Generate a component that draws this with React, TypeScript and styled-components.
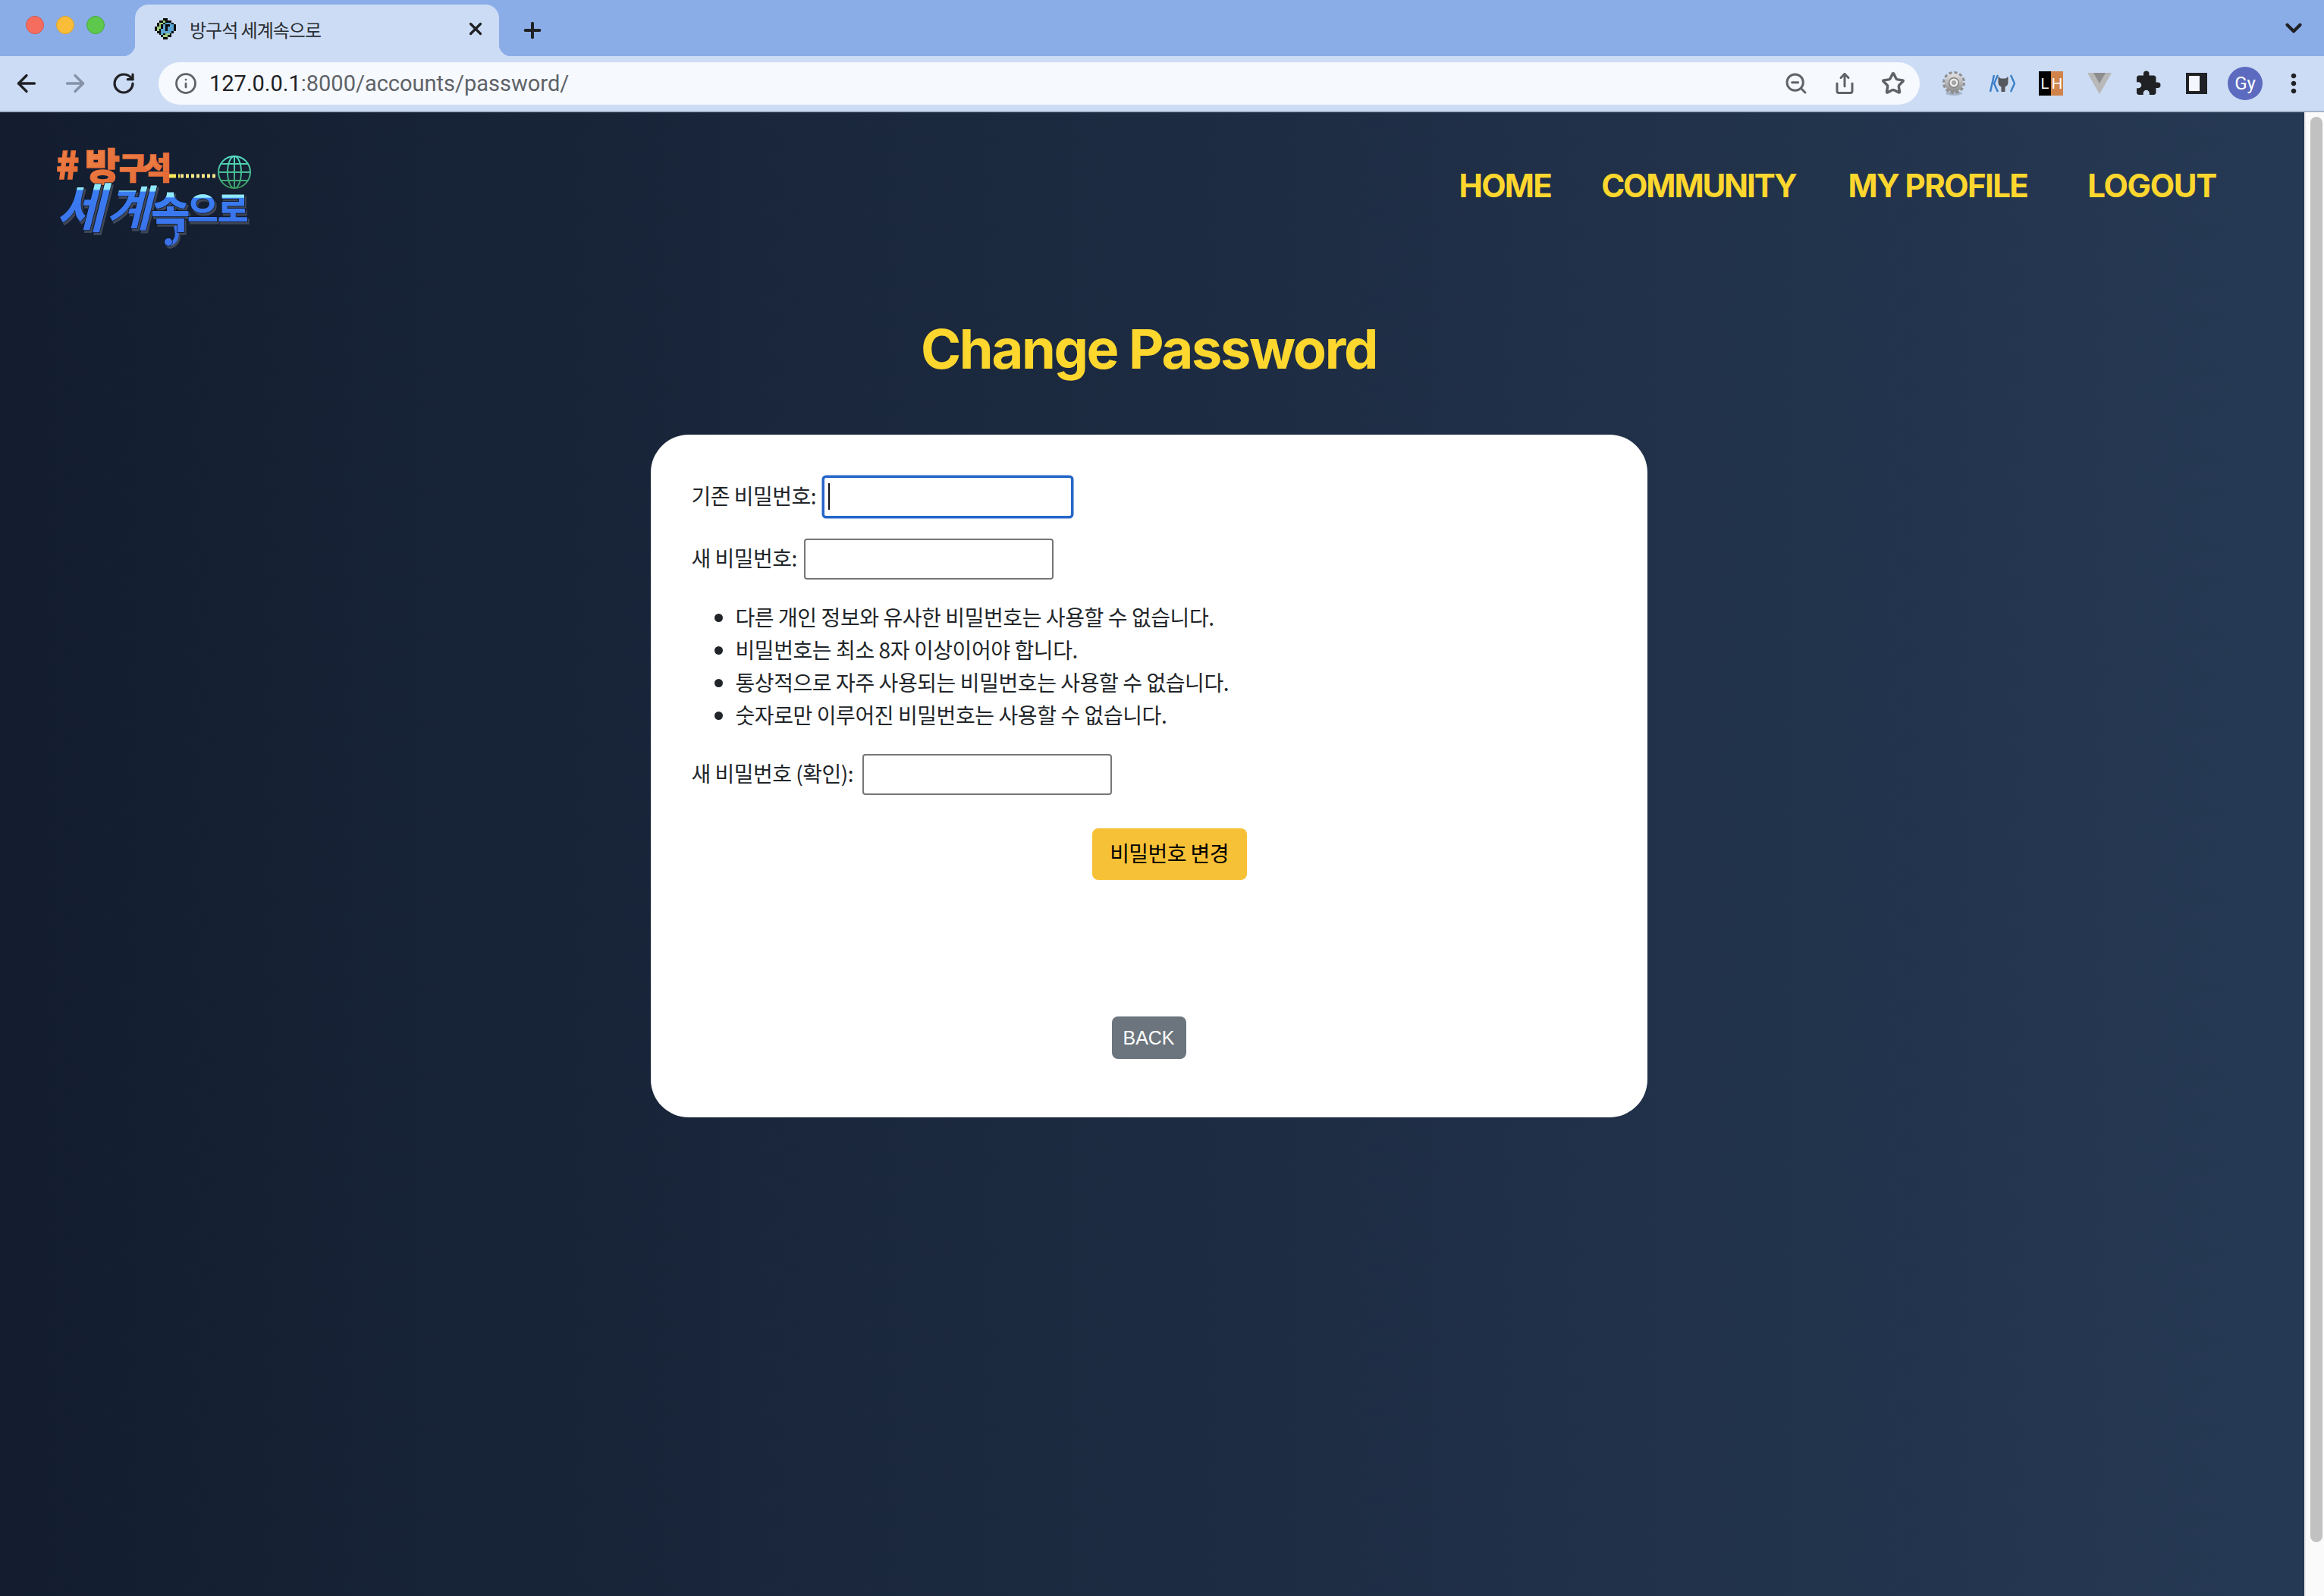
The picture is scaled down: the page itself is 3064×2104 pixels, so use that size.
import React from "react";
import styled, { createGlobalStyle } from "styled-components";
import { ArrowLeft, ArrowRight, RotateCw, Info, ZoomOut, Share, Star, X, Plus, ChevronDown } from "lucide-react";
import { MdExtension, MdMoreVert } from "react-icons/md";

const Global = createGlobalStyle`
  html, body { margin: 0; padding: 0; background: #fff; }
  body { font-family: "Noto Sans CJK KR", "Liberation Sans", sans-serif; color: #212529; }
  * { box-sizing: border-box; }
`;

const Shell = styled.div`
  width: 3064px;
  height: 2104px;
  display: flex;
  flex-direction: column;
  overflow: hidden;
`;

const TabStrip = styled.div`
  height: 74px;
  background: #8aade8;
  display: flex;
  align-items: flex-end;
`;

const Lights = styled.div`
  display: flex;
  gap: 16px;
  padding: 0 40px 29px 34px;
`;

const Light = styled.span<{ $c: string; $b: string }>`
  width: 24px;
  height: 24px;
  border-radius: 50%;
  background: ${(p) => p.$c};
  border: 1px solid ${(p) => p.$b};
`;

const Tab = styled.div`
  position: relative;
  width: 480px;
  height: 68px;
  background: #ccdcf5;
  border-radius: 18px 18px 0 0;
  display: flex;
  align-items: center;
  padding: 0 18px 4px 26px;
  &::before, &::after {
    content: "";
    position: absolute;
    bottom: 0;
    width: 16px;
    height: 16px;
  }
  &::before { left: -16px; background: radial-gradient(circle at 0 0, transparent 16px, #ccdcf5 16.5px); }
  &::after { right: -16px; background: radial-gradient(circle at 100% 0, transparent 16px, #ccdcf5 16.5px); }
`;

const TabTitle = styled.span`
  margin-left: 18px;
  flex: 1;
  font-size: 24px;
  letter-spacing: -1px;
  color: #2a2e33;
  white-space: nowrap;
`;

const NewTab = styled.div`
  width: 88px;
  display: flex;
  justify-content: center;
  padding-bottom: 18px;
  color: #202124;
`;

const TabMenu = styled.div`
  margin-left: auto;
  width: 80px;
  display: flex;
  justify-content: center;
  padding: 0 0 20px 0;
  color: #202124;
`;

const Toolbar = styled.div`
  height: 74px;
  background: #ccdcf5;
  border-bottom: 2px solid #a6b4c9;
  display: flex;
  align-items: center;
  padding-left: 3px;
`;

const Slot = styled.div<{ $c?: string }>`
  width: 64px;
  height: 56px;
  flex: none;
  display: flex;
  align-items: center;
  justify-content: center;
  color: ${(p) => p.$c || "#202124"};
`;

const Omnibox = styled.div`
  margin-left: 14px;
  margin-right: 13px;
  width: 2322px;
  height: 56px;
  border-radius: 28px;
  background: #f6f9fe;
  display: flex;
  align-items: center;
  padding: 0 3px 0 21px;
  color: #5f6368;
`;

const Url = styled.div`
  margin-left: 16px;
  flex: 1;
  font-family: "Roboto", "Liberation Sans", sans-serif;
  font-size: 29px;
  letter-spacing: 0px;
  color: #5f6368;
  b { font-weight: 400; color: #202124; }
`;

const LhBadge = styled.div`
  width: 32px;
  height: 32px;
  display: flex;
  font-family: "Liberation Sans", sans-serif;
  font-size: 20px;
  color: #fff;
`;

const LhPart = styled.span<{ $bg: string }>`
  flex: 1;
  background: ${(p) => p.$bg};
  display: flex;
  align-items: center;
  justify-content: center;
`;

const Avatar = styled.div`
  width: 46px;
  height: 44px;
  border-radius: 50%;
  background: #5c6bc0;
  color: #fff;
  font-family: "Roboto", sans-serif;
  font-size: 24px;
  display: flex;
  align-items: center;
  justify-content: center;
`;

const Viewport = styled.div`
  flex: 1;
  display: flex;
  min-height: 0;
`;

const Page = styled.div`
  width: 3038px;
  background: linear-gradient(to right, #131d2f, #263954);
`;

const Scrollbar = styled.div`
  width: 26px;
  background: #fafafa;
  border-left: 2px solid #ececec;
  padding: 6px 2px 0 6px;
`;

const Thumb = styled.div`
  height: 1879px;
  border-radius: 8px;
  background: #c1c1c1;
`;

const Navbar = styled.header`
  display: flex;
  justify-content: space-between;
  align-items: flex-start;
  padding: 40px 116px 0 70px;
`;

const NavList = styled.nav`
  display: flex;
  margin-top: 32px;
`;

const NavLink = styled.a<{ $ml: number; $ls: number }>`
  margin-left: ${(p) => p.$ml}px;
  font-family: "Inter", sans-serif;
  font-weight: 700;
  font-size: 42px;
  line-height: 50px;
  letter-spacing: ${(p) => p.$ls}px;
  color: #fdd72e;
  white-space: nowrap;
`;

const Main = styled.main`
  display: flex;
  flex-direction: column;
  align-items: center;
  padding-right: 9px;
`;

const Title = styled.h1`
  margin: 89px 0 70px;
  font-family: "Inter", sans-serif;
  font-weight: 700;
  font-size: 72px;
  line-height: 86px;
  letter-spacing: -2.3px;
  color: #fdd72e;
`;

const Card = styled.section`
  width: 1314px;
  height: 900px;
  background: #fff;
  border-radius: 50px;
  padding: 55px 54px 0;
  display: flex;
  flex-direction: column;
`;

const Field = styled.div<{ $gap?: number }>`
  display: flex;
  align-items: center;
  gap: ${(p) => p.$gap ?? 9}px;
  font-size: 28px;
  letter-spacing: -0.5px;
  label { position: relative; top: -2px; }
`;

const InputWrap = styled.div`
  position: relative;
  display: flex;
`;

const TextInput = styled.input<{ $focused?: boolean }>`
  width: 329px;
  height: 54px;
  padding: 2px 6px;
  background: #fff;
  border: 2px solid #767676;
  border-radius: 4px;
  outline: none;
  ${(p) => p.$focused && `
    border-color: #2566c9;
    box-shadow: 0 0 0 1.5px #2566c9;
  `}
`;

const Caret = styled.span`
  position: absolute;
  left: 7px;
  top: 9px;
  width: 2px;
  height: 35px;
  background: #111;
`;

const Rules = styled.ul`
  margin: 28px 0 30px;
  padding: 0 0 0 58px;
  font-size: 28px;
  line-height: 43px;
  letter-spacing: -0.42px;
`;

const FieldGap = styled.div`
  height: 28px;
`;

const SubmitButton = styled.button`
  align-self: flex-start;
  margin: 44px 0 0 528px;
  width: 204px;
  height: 68px;
  border: 0;
  border-radius: 8px;
  background: #f7c137;
  color: #000;
  font-family: inherit;
  font-size: 28px;
  letter-spacing: -0.6px;
  padding: 0 0 4px;
`;

const BackLink = styled.a`
  align-self: center;
  margin-top: 180px;
  width: 98px;
  height: 56px;
  border-radius: 8px;
  background: #6c757d;
  color: #fff;
  font-family: "Liberation Sans", sans-serif;
  font-size: 25px;
  display: flex;
  align-items: center;
  justify-content: center;
`;

const LogoSvg = styled.svg`
  overflow: visible;
  flex: none;
`;

const FAV = [
  "....KK....",
  "..KKgKKK..",
  ".KggKbbbK.",
  ".KgKbKKbbK",
  "KggKbKbbbK",
  "KgKbbKbbbK",
  ".KKbbbbbK.",
  "..KbKggK..",
  "...KggKK..",
  "....KK....",
];

const Favicon = () => (
  <svg width="28" height="28" viewBox="0 0 10 10" shapeRendering="crispEdges">
    {FAV.flatMap((row, y) =>
      row.split("").map((c, x) =>
        c === "." ? null : (
          <rect key={`${x}-${y}`} x={x} y={y} width="1" height="1" fill={c === "K" ? "#0b0b0b" : c === "g" ? "#9ccb78" : "#5ba3d0"} />
        ),
      ),
    )}
  </svg>
);

const GearIcon = () => (
  <svg width="34" height="34" viewBox="0 0 34 34">
    <defs>
      <linearGradient id="gearG" x1="0" y1="0" x2="0" y2="1">
        <stop offset="0" stopColor="#e2e2e2" />
        <stop offset="1" stopColor="#8a8a8a" />
      </linearGradient>
    </defs>
    <ellipse cx="17" cy="30" rx="11" ry="3" fill="#8d98a8" opacity="0.6" />
    <circle cx="17" cy="16" r="13" fill="none" stroke="#8f8f8f" strokeWidth="4" strokeDasharray="4.1 2.7" />
    <circle cx="17" cy="16" r="12" fill="url(#gearG)" />
    <circle cx="17" cy="16" r="7" fill="#7f7f7f" />
    <circle cx="17" cy="16" r="5.5" fill="#ececec" />
    <circle cx="17" cy="16" r="3" fill="#a2a2a2" />
  </svg>
);

const OctoIcon = () => (
  <svg width="34" height="24" viewBox="0 0 34 24">
    <path d="M6 1 1 23M11 1 6 12l5 11M28 1l5 11-5 11" fill="none" stroke="#3a7fc8" strokeWidth="2.4" />
    <path d="M11.5 3l3.500 2.500h6L24.500 3v8c0 3-2.500 5-4 5.500V23h-5v-6.500C14 16 11.500 14 11.500 11z" fill="#55585c" />
  </svg>
);

const VueIcon = () => (
  <svg width="32" height="28" viewBox="0 0 32 28">
    <polygon points="0,0 32,0 16,28" fill="#b8b8b8" />
    <polygon points="8,0 24,0 16,14" fill="#8e8e8e" />
  </svg>
);

const SidebarIcon = () => (
  <svg width="28" height="28" viewBox="0 0 28 28">
    <rect width="28" height="28" fill="#202124" />
    <rect x="4" y="4" width="14" height="20" fill="#f4f7fd" />
  </svg>
);

const Logo = () => (
  <LogoSvg width="262" height="140" viewBox="70 188 262 140">
    <defs>
      <linearGradient id="orange" x1="0" y1="0" x2="1" y2="1">
        <stop offset="0" stopColor="#f28d4e" />
        <stop offset="1" stopColor="#e0602f" />
      </linearGradient>
      <linearGradient id="blue" x1="0" y1="0" x2="0" y2="1">
        <stop offset="0" stopColor="#8fe9ff" />
        <stop offset="0.3" stopColor="#8fe9ff" />
        <stop offset="0.32" stopColor="#3a7cf2" />
        <stop offset="1" stopColor="#3a70e8" />
      </linearGradient>
      <linearGradient id="globeG" x1="0" y1="0" x2="0" y2="1">
        <stop offset="0" stopColor="#55e0c8" />
        <stop offset="1" stopColor="#3a9a60" />
      </linearGradient>
    </defs>
    <g fontFamily="'Noto Sans CJK KR', sans-serif" fontWeight="900">
      <g fill="url(#orange)" stroke="#e8703a" strokeWidth="1.5">
        <text x="74" y="236" fontSize="50">#</text>
        <text x="112" y="238" fontSize="50">방</text>
        <text x="157" y="236" fontSize="40">구</text>
        <text x="189" y="236" fontSize="40">석</text>
      </g>
      <g fill="url(#blue)" stroke="#0e1526" strokeWidth="1.5" paintOrder="stroke" style={{ filter: "drop-shadow(2px 3px 0 #3f4757)" }}>
        <text x="74" y="300" fontSize="70" fontWeight="700" fontStyle="italic">세</text>
        <text x="140" y="298" fontSize="64" fontWeight="700" fontStyle="italic">계</text>
        <path d="M232 300c4 14-2 20-9 22" fill="none" stroke="#3a70e8" strokeWidth="5" strokeLinecap="round" />
        <circle cx="222" cy="319" r="5" fill="#3a70e8" />
        <text x="199" y="300" fontSize="56">속</text>
        <text x="247" y="292" fontSize="44">으</text>
        <text x="287" y="292" fontSize="44">로</text>
      </g>
    </g>
    <path d="M223 232h14" stroke="#f5e65a" strokeWidth="5" strokeDasharray="9 3" />
    <path d="M238 232h46" stroke="#f5e88a" strokeWidth="5" strokeDasharray="4 3" />
    <g fill="none" stroke="url(#globeG)" strokeWidth="2">
      <ellipse cx="309" cy="227" rx="21" ry="21" />
      <ellipse cx="309" cy="227" rx="9" ry="21" />
      <path d="M309 206v42M288 227h42M291 216h36M291 238h36" />
    </g>
  </LogoSvg>
);

const rules = [
  "다른 개인 정보와 유사한 비밀번호는 사용할 수 없습니다.",
  "비밀번호는 최소 8자 이상이어야 합니다.",
  "통상적으로 자주 사용되는 비밀번호는 사용할 수 없습니다.",
  "숫자로만 이루어진 비밀번호는 사용할 수 없습니다.",
];

export default function App() {
  return (
    <Shell>
      <Global />
      <TabStrip>
        <Lights>
          <Light $c="#f46d5f" $b="#d9574a" />
          <Light $c="#fabd39" $b="#dca12c" />
          <Light $c="#5dc84c" $b="#4aa93c" />
        </Lights>
        <Tab>
          <Favicon />
          <TabTitle>방구석 세계속으로</TabTitle>
          <X size={26} strokeWidth={3} color="#202124" />
        </Tab>
        <NewTab>
          <Plus size={32} strokeWidth={3} />
        </NewTab>
        <TabMenu>
          <ChevronDown size={34} strokeWidth={3} />
        </TabMenu>
      </TabStrip>
      <Toolbar>
        <Slot><ArrowLeft size={36} strokeWidth={2.2} /></Slot>
        <Slot $c="#8491a6"><ArrowRight size={36} strokeWidth={2.2} /></Slot>
        <Slot><RotateCw size={32} strokeWidth={2.4} /></Slot>
        <Omnibox>
          <Info size={30} strokeWidth={2.2} />
          <Url><b>127.0.0.1</b>:8000/accounts/password/</Url>
          <Slot $c="#5f6368"><ZoomOut size={32} strokeWidth={2.2} /></Slot>
          <Slot $c="#5f6368"><Share size={30} strokeWidth={2.4} /></Slot>
          <Slot $c="#5f6368"><Star size={32} strokeWidth={2.6} /></Slot>
        </Omnibox>
        <Slot><GearIcon /></Slot>
        <Slot><OctoIcon /></Slot>
        <Slot>
          <LhBadge>
            <LhPart $bg="#000">L</LhPart>
            <LhPart $bg="#d0834a">H</LhPart>
          </LhBadge>
        </Slot>
        <Slot><VueIcon /></Slot>
        <Slot><MdExtension size={36} /></Slot>
        <Slot><SidebarIcon /></Slot>
        <Slot><Avatar>Gy</Avatar></Slot>
        <Slot><MdMoreVert size={40} /></Slot>
      </Toolbar>
      <Viewport>
        <Page>
          <Navbar>
            <Logo />
            <NavList>
              <NavLink $ml={0} $ls={-1.7}>HOME</NavLink>
              <NavLink $ml={66} $ls={-2.1}>COMMUNITY</NavLink>
              <NavLink $ml={69} $ls={-1.6}>MY PROFILE</NavLink>
              <NavLink $ml={79} $ls={-1.3}>LOGOUT</NavLink>
            </NavList>
          </Navbar>
          <Main>
            <Title>Change Password</Title>
            <Card>
              <Field>
                <label>기존 비밀번호:</label>
                <InputWrap>
                  <TextInput type="password" $focused />
                  <Caret />
                </InputWrap>
              </Field>
              <FieldGap />
              <Field>
                <label>새 비밀번호:</label>
                <TextInput type="password" />
              </Field>
              <Rules>
                {rules.map((r) => (
                  <li key={r}>{r}</li>
                ))}
              </Rules>
              <Field $gap={12}>
                <label>새 비밀번호 (확인):</label>
                <TextInput type="password" />
              </Field>
              <SubmitButton type="button">비밀번호 변경</SubmitButton>
              <BackLink>BACK</BackLink>
            </Card>
          </Main>
        </Page>
        <Scrollbar>
          <Thumb />
        </Scrollbar>
      </Viewport>
    </Shell>
  );
}
